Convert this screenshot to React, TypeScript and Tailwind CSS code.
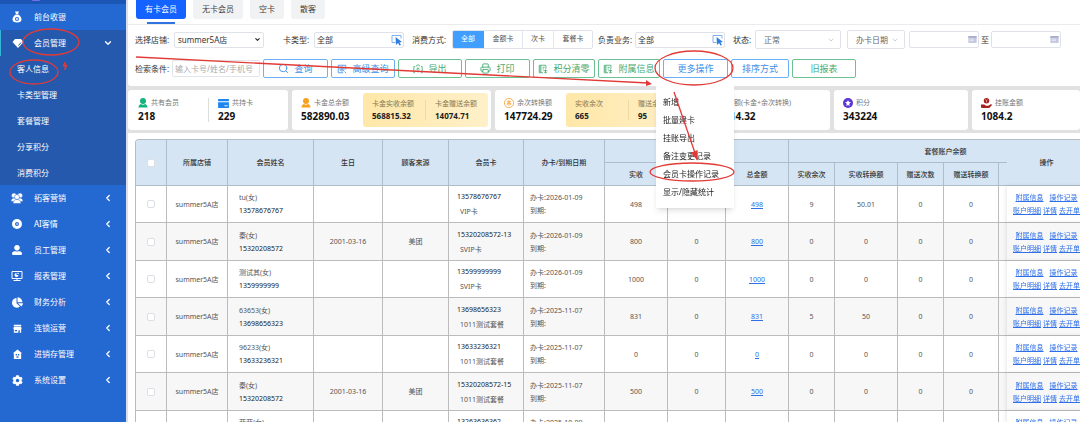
import React from 'react';
import { FaChartPie, FaCog, FaUserAlt } from 'react-icons/fa';
import { ChevronDown, ChevronLeft, Printer, Search } from 'lucide-react';
import clsx from 'clsx';

const BagIcon = () => (
  <svg viewBox="0 0 24 24" className="size-3" fill="currentColor">
    <path d="M8 1h8l-2 5h-4z" />
    <path
      fillRule="evenodd"
      d="M9 7h6c4 3 6 7 6 10 0 4-3 6-9 6s-9-2-9-6c0-3 2-7 6-10zm3 5a4 4 0 1 0 0 8 4 4 0 0 0 0-8z"
    />
    <circle cx="12" cy="16" r="2" />
  </svg>
);

const DiamondIcon = () => (
  <svg viewBox="0 0 24 24" className="size-3" fill="currentColor">
    <path d="M6 4h12l5 6-11 12L1 10z" />
    <path d="M13 17l5-6" stroke="#2559ad" strokeWidth="2" fill="none" />
  </svg>
);

const GroupIcon = () => (
  <svg viewBox="0 0 24 24" className="size-3" fill="currentColor" stroke="#2468d2">
    <circle cx="6" cy="7" r="5" />
    <circle cx="18" cy="7" r="5" />
    <path d="M0 19c0-5 3-7 6-7s5 2 6 4c1-2 3-4 6-4s6 2 6 7z" />
    <circle cx="12" cy="10" r="5" />
    <path d="M4 23c0-6 4-8 8-8s8 2 8 8z" />
  </svg>
);

const PlayIcon = () => (
  <svg viewBox="0 0 24 24" className="size-3" fill="currentColor">
    <path
      fillRule="evenodd"
      d="M12 2a10 10 0 1 0 0 20 10 10 0 0 0 0-20zm0 6a4 4 0 1 1 0 8 4 4 0 0 1 0-8z"
    />
    <path d="M11 10l4 2-4 2z" />
  </svg>
);

const MonitorIcon = () => (
  <svg viewBox="0 0 24 24" className="size-3" fill="none" stroke="currentColor" strokeWidth="2">
    <path d="M2 3h20v14H2zM5 21h14M12 17v4" />
    <path d="M11 6a4 4 0 1 0 4 4h-4z" fill="currentColor" stroke="none" />
    <path d="M13 5v3h3a3 3 0 0 0-3-3z" fill="currentColor" stroke="none" />
  </svg>
);

const ShopIcon = () => (
  <svg viewBox="0 0 24 24" className="size-[11px]" fill="currentColor">
    <path d="M4 4h16v3H4zM4 8h16l1 5H3z" />
    <path fillRule="evenodd" d="M4 13h16v8h-3v-5h-3v5H4zm2 2v3h5v-3z" />
  </svg>
);

const HouseIcon = () => (
  <svg viewBox="0 0 24 24" className="size-[11px]" fill="currentColor">
    <path
      fillRule="evenodd"
      d="M12 1l10 8h-2v13H4V9H2zm-4 10v3h3v-3zm5 0v3h3v-3zm-3 5v3h4v-3z"
    />
  </svg>
);

const PickIcon = () => (
  <svg viewBox="0 0 24 24" className="size-3 shrink-0" fill="none">
    <path d="M9 17H2V3h18v6" stroke="#7fb2ee" strokeWidth="2" />
    <path d="M9 6l13 10-5 1 3 5-3 1-3-5-4 4z" fill="#2f7fe0" />
  </svg>
);

const CalendarIcon = () => (
  <svg viewBox="0 0 24 24" className="size-[9px] shrink-0">
    <path d="M1 3h22v18H1z" fill="#c3c6dc" />
    <path d="M1 3h22v4H1z" fill="#a4a9c8" />
    <path d="M4 11h12M4 15h12" stroke="#eef" strokeWidth="2" />
  </svg>
);

const NoteIcon = () => (
  <svg viewBox="0 0 24 24" className="size-[10px]" fill="none" stroke="currentColor" strokeWidth="2">
    <path d="M12 21H3V3h16v9M3 7h4M3 12h4M3 17h4M7 3v18M11 8h5M11 12h3M13 16h9M18 13v9M15 19l3 3 3-3" />
  </svg>
);

const AtIcon = () => (
  <svg viewBox="0 0 24 24" className="size-[10px]" fill="none" stroke="currentColor" strokeWidth="2">
    <path d="M21 13V3H3v18h12M18 18l4 4" />
    <circle cx="12" cy="12" r="5" />
    <circle cx="12" cy="12" r="2" />
  </svg>
);

const ExportIcon = () => (
  <svg viewBox="0 0 24 24" className="size-[10px]" fill="none" stroke="currentColor" strokeWidth="2">
    <path d="M5 6H2v15h3M19 6h3v15h-3M12 20V9M8 13l4-4 4 4" />
    <path d="M8 6a4 4 0 0 1 8 0" />
  </svg>
);

const PersonIcon = ({ className }: { className: string }) => (
  <svg viewBox="0 0 20 20" className={clsx('size-[10px]', className)} fill="currentColor">
    <circle cx="10" cy="6" r="6" />
    <path d="M1 19c0-4 2-6 5-7 2 2 6 2 8 0 3 1 5 3 5 7z" />
  </svg>
);

const CardIcon = () => (
  <svg viewBox="0 0 24 20" className="h-[9px] w-[11px]" fill="#1f86f0">
    <path d="M0 0h24v5H0zM0 7h24v13H0z" />
    <path d="M14 15h7" stroke="#fff" strokeWidth="2" />
  </svg>
);

const CoinIcon = () => (
  <svg viewBox="0 0 24 24" className="size-[10px]" fill="none" stroke="#f5a238" strokeWidth="2">
    <circle cx="12" cy="12" r="11" />
    <path d="M7 8h10M12 6v13M8 12h8v5M8 12v5" />
  </svg>
);

const StarIcon = () => (
  <svg viewBox="0 0 24 24" className="size-[10px]">
    <circle cx="12" cy="12" r="12" fill="#5b35d5" />
    <path d="M12 5l2 4 5 1-4 4 1 5-4-2-4 2 1-5-4-4 5-1z" fill="#fff" />
  </svg>
);

const HandIcon = () => (
  <svg viewBox="0 0 24 24" className="size-[11px]" fill="#a8201a">
    <circle cx="12" cy="6" r="6" />
    <path d="M0 14h7l4 3h5l6-4 2 2-6 7H5l-5-1z" />
    <path d="M10 3l2 3 2-3M12 6v4" stroke="#fff" fill="none" />
  </svg>
);

const subMenu = ['客人信息', '卡类型管理', '套餐管理', '分享积分', '消费积分'];

const menu = [
  { label: '拓客营销', icon: <GroupIcon /> },
  { label: 'AI客情', icon: <PlayIcon /> },
  { label: '员工管理', icon: <FaUserAlt className="size-[10px]" /> },
  { label: '报表管理', icon: <MonitorIcon /> },
  { label: '财务分析', icon: <FaChartPie className="size-[11px]" /> },
  { label: '连锁运营', icon: <ShopIcon /> },
  { label: '进销存管理', icon: <HouseIcon /> },
  { label: '系统设置', icon: <FaCog className="size-[11px]" /> },
];

const Sidebar: React.FC = () => (
  <nav className="flex w-[126px] shrink-0 flex-col bg-[#2468d2] text-[8px] text-white">
    <div className="flex h-1 bg-[#1b56b5] pl-8">
      <span className="h-px w-2 rounded-b bg-[#7a6cf0]" />
    </div>
    <a href="#cashier" className="flex h-[26px] items-center">
      <span className="flex w-[34px] justify-center">
        <BagIcon />
      </span>
      前台收银
    </a>
    <div className="bg-[#2559ad]">
      <button className="flex h-[26px] w-full items-center border-l border-[#35b5d8] pr-[13px]">
        <span className="flex w-[33px] justify-center">
          <DiamondIcon />
        </span>
        <span className="flex-1 text-left">会员管理</span>
        <ChevronDown className="size-[10px]" strokeWidth={3} />
      </button>
      {subMenu.map((item) => (
        <a key={item} href={`#${item}`} className="flex h-[26px] items-center pl-[17px] last:h-[25px]">
          {item}
        </a>
      ))}
    </div>
    {menu.map((item) => (
      <button key={item.label} className="flex h-[26px] items-center pr-[13px]">
        <span className="flex w-[34px] justify-center">{item.icon}</span>
        <span className="flex-1 text-left">{item.label}</span>
        <ChevronLeft className="size-[10px]" strokeWidth={3} />
      </button>
    ))}
  </nav>
);

const tabs = ['无卡会员', '空卡', '散客'];

const Tabs: React.FC = () => (
  <div className="flex h-[25px] gap-[7px] border-b border-[#ebebee] pl-2 text-[8px] text-[#444]">
    <div className="flex flex-col items-center justify-between">
      <button className="h-[19px] rounded-b-[3px] bg-[#1462ff] px-[9px] pb-[2px] text-white">有卡会员</button>
      <span className="h-[2px] w-7 bg-[#2f74e0]" />
    </div>
    {tabs.map((tab) => (
      <button key={tab} className="h-[19px] rounded-b-[3px] bg-[#f1f2f3] px-[9px] pb-[2px]">
        {tab}
      </button>
    ))}
  </div>
);

const box = 'flex items-center rounded-[2px] border border-[#dfe2e8] bg-white';

const Filters: React.FC = () => (
  <div className="mt-[5px] flex h-[19px] items-center pl-[7px] text-[8px] whitespace-nowrap text-[#333] *:shrink-0">
    <label htmlFor="shop" className="w-[39px]">
      选择店铺:
    </label>
    <div className={clsx(box, 'h-4 w-[90px] pr-[2px]')}>
      <select id="shop" className="w-full flex-1 appearance-none pl-[3px] outline-none">
        <option>summer5A店</option>
      </select>
      <ChevronDown className="size-[7px]" strokeWidth={4} />
    </div>
    <label htmlFor="card-type" className="ml-[19px] w-[31px]">
      卡类型:
    </label>
    <div className={clsx(box, 'h-4 w-[90px]')}>
      <input id="card-type" defaultValue="全部" className="w-0 flex-1 pl-[2px] outline-none" />
      <PickIcon />
    </div>
    <span className="ml-2 w-[40px]">消费方式:</span>
    <div className="flex h-[19px] overflow-hidden rounded-[2px] border border-[#dfe2e8] text-[7px] text-[#555]">
      <button className="-my-px -ml-px w-8 bg-[#409eff] text-white">全部</button>
      <button className="w-[38px]">金额卡</button>
      <button className="w-8 border-x border-[#e4e7ed]">次卡</button>
      <button className="w-[38px]">套餐卡</button>
    </div>
    <label htmlFor="business" className="ml-[5px] w-[37px]">
      负责业务:
    </label>
    <div className={clsx(box, 'h-4 w-[90px]')}>
      <input id="business" defaultValue="全部" className="w-0 flex-1 pl-[2px] outline-none" />
      <PickIcon />
    </div>
    <label htmlFor="status" className="ml-2 w-[22px]">
      状态:
    </label>
    <div className={clsx(box, 'h-[19px] w-[86px] pr-[5px] text-[#666]')}>
      <select id="status" className="w-full flex-1 appearance-none pl-2 outline-none">
        <option>正常</option>
      </select>
      <ChevronDown className="size-2 text-[#b5b9c2]" />
    </div>
    <div className={clsx(box, 'ml-[6px] h-[19px] w-[58px] pr-[5px] text-[#666]')}>
      <select aria-label="日期类型" className="w-full flex-1 appearance-none pl-2 outline-none">
        <option>办卡日期</option>
      </select>
      <ChevronDown className="size-2 text-[#b5b9c2]" />
    </div>
    <div className={clsx(box, 'ml-1 h-[17px] w-[70px] pr-px')}>
      <input aria-label="开始日期" className="w-0 flex-1 outline-none" />
      <CalendarIcon />
    </div>
    <span className="mx-[2px]">至</span>
    <div className={clsx(box, 'h-[17px] w-[70px] pr-px')}>
      <input aria-label="结束日期" className="w-0 flex-1 outline-none" />
      <CalendarIcon />
    </div>
  </div>
);

const moreActions = ['新增', '批量建卡', '挂账导出', '备注变更记录', '会员卡操作记录', '显示/隐藏统计'];

const button = 'flex h-[19px] items-center justify-center gap-[5px] rounded-[2px] border bg-white';
const blue = 'border-[#6cb0f5] text-[#3d8fe8]';
const green = 'border-[#6cc093] text-[#45ab74]';

const Actions: React.FC = () => (
  <div className="mt-[10px] flex h-[19px] items-center gap-[3px] pl-[7px] text-[9px] whitespace-nowrap *:shrink-0">
    <label htmlFor="keyword" className="w-[34px] text-[8px] text-[#333]">
      检索条件:
    </label>
    <input
      id="keyword"
      placeholder="输入卡号/姓名/手机号"
      className="h-[17px] w-[88px] rounded-[2px] border border-[#e2e5ea] pl-[2px] text-[8px] outline-none placeholder:text-[#aaa]"
    />
    <button className={clsx(button, blue, 'w-[65px]')}>
      <Search className="size-[11px]" />
      查询
    </button>
    <button className={clsx(button, blue, 'w-[64px]')}>
      <AtIcon />
      高级查询
    </button>
    <button className={clsx(button, green, 'w-[64px]')}>
      <ExportIcon />
      导出
    </button>
    <button className={clsx(button, green, 'w-[65px]')}>
      <Printer className="size-[11px]" />
      打印
    </button>
    <button className={clsx(button, green, 'w-[62px]')}>
      <NoteIcon />
      积分清零
    </button>
    <button className={clsx(button, green, 'w-[62px]')}>
      <NoteIcon />
      附属信息
    </button>
    <div className="relative">
      <button className={clsx(button, blue, 'w-[65px]')}>更多操作</button>
      <ul className="absolute top-[27px] -left-[7px] z-20 w-[78px] bg-white py-[7px] text-[8px] text-[#222] shadow-md">
        {moreActions.map((action) => (
          <li key={action}>
            <button className="h-[18px] w-full pl-[7px] text-left">{action}</button>
          </li>
        ))}
      </ul>
    </div>
    <button className={clsx(button, blue, 'w-[58px]')}>排序方式</button>
    <button className={clsx(button, green, 'w-[64px]')}>旧报表</button>
  </div>
);

interface StatProps {
  icon: React.ReactNode;
  label: string;
  value: string;
  className?: string;
}

const Stat: React.FC<StatProps> = ({ icon, label, value, className }) => (
  <div className={clsx('flex flex-col justify-center', className)}>
    <div className="flex h-3 items-center gap-[3px] text-[7px] text-[#777]">
      {icon}
      {label}
    </div>
    <div className="h-[14px] text-[10px] leading-[14px] font-bold text-[#111]">{value}</div>
  </div>
);

const SubStat: React.FC<{ label: string; value: string }> = ({ label, value }) => (
  <div className="flex flex-1 flex-col justify-center pl-[9px]">
    <div className="h-3 text-[7px] leading-[12px] text-[#857850]">{label}</div>
    <div className="h-3 text-[8px] leading-[12px] font-bold text-[#222]">{value}</div>
  </div>
);

const amber = 'flex h-[34px] items-center rounded-[3px] bg-linear-to-r from-[#ffe7a8] to-[#fff0c9]';

const Stats: React.FC = () => (
  <div className="flex gap-1 bg-[#e1e1e1] pt-1 pb-[3px] whitespace-nowrap *:h-10 *:rounded-[3px] *:bg-white">
    <div className="flex w-[160px] items-center pl-[10px]">
      <Stat
        icon={<PersonIcon className="text-[#15b27a]" />}
        label="共有会员"
        value="218"
        className="w-[70px]"
      />
      <span className="mr-[9px] h-6 w-px bg-[#ddd]" />
      <Stat icon={<CardIcon />} label="共持卡" value="229" />
    </div>
    <div className="flex w-[199px] items-center pl-[9px]">
      <Stat
        icon={<PersonIcon className="text-[#f9a11f]" />}
        label="卡金总余额"
        value="582890.03"
        className="w-[62px]"
      />
      <div className={clsx(amber, 'w-[125px]')}>
        <SubStat label="卡金实收余额" value="568815.32" />
        <span className="h-5 w-px bg-[#eed9a0]" />
        <SubStat label="卡金赠送余额" value="14074.71" />
      </div>
    </div>
    <div className="flex w-[199px] items-center pl-[9px]">
      <Stat icon={<CoinIcon />} label="余次转换额" value="147724.29" className="w-[62px]" />
      <div className={clsx(amber, 'w-[125px]')}>
        <SubStat label="实收余次" value="665" />
        <span className="h-5 w-px bg-[#eed9a0]" />
        <SubStat label="赠送余次" value="95" />
      </div>
    </div>
    <div className="flex w-[132px] items-center pl-[9px]">
      <Stat icon={<CoinIcon />} label="总余额(卡金+余次转换)" value="730614.32" />
    </div>
    <div className="flex w-[134px] items-center pl-[9px]">
      <Stat icon={<StarIcon />} label="积分" value="343224" />
    </div>
    <div className="flex flex-1 items-center pl-[9px]">
      <Stat icon={<HandIcon />} label="挂账金额" value="1084.2" />
    </div>
  </div>
);

interface Member {
  name: string;
  phone: string;
  birthday?: string;
  source?: string;
  card: string;
  cardType: string;
  opened: string;
  paid: string;
  times: string;
  converted: string;
}

const members: Member[] = [
  { name: 'tu(女)', phone: '13578676767', card: '13578676767', cardType: 'VIP卡', opened: '2026-01-09', paid: '498', times: '9', converted: '50.01' },
  { name: '秦(女)', phone: '15320208572', birthday: '2001-03-16', source: '美团', card: '15320208572-13', cardType: 'SVIP卡', opened: '2026-01-09', paid: '800', times: '0', converted: '0' },
  { name: '测试其(女)', phone: '1359999999', card: '13599999999', cardType: 'SVIP卡', opened: '2026-01-09', paid: '1000', times: '0', converted: '0' },
  { name: '63653(女)', phone: '13698656323', card: '13698656323', cardType: '1011测试套餐', opened: '2025-11-07', paid: '831', times: '5', converted: '50' },
  { name: '96233(女)', phone: '13633236321', card: '13633236321', cardType: '1011测试套餐', opened: '2025-11-07', paid: '0', times: '0', converted: '0' },
  { name: '秦(女)', phone: '15320208572', birthday: '2001-03-16', source: '美团', card: '15320208572-15', cardType: '1011测试套餐', opened: '2025-11-07', paid: '500', times: '0', converted: '0' },
  { name: '菲菲(女)', phone: '13263636362', card: '13263636362', cardType: 'VIP卡', opened: '2025-10-09', paid: '0', times: '0', converted: '0' },
];

const columns = [31, 61, 86, 69, 66, 75, 81, 63, 58, 63, 46, 63, 46, 55, 104, 80];

const check = 'block size-2 appearance-none rounded-[2px] border border-[#dcdfe6] bg-white mx-auto';
const link = 'text-[#2f6fe8] underline';

const MemberTable: React.FC = () => (
  <div className="flex-1 overflow-hidden bg-white pt-[6px] pl-[7px]">
    <div className="overflow-hidden rounded-tl-[4px] border-t border-l border-[#b4bcc4]">
      <table className="w-[1047px] table-fixed border-separate border-spacing-0 text-center text-[7px] leading-[13px] whitespace-nowrap text-[#555]">
        <colgroup>
          {columns.map((width, i) => (
            <col key={i} style={{ width }} />
          ))}
        </colgroup>
        <thead className="text-[#333] [&_th]:border-r [&_th]:border-b [&_th]:border-[#aebdcb] [&_th]:bg-[#d5e5f4] [&_th]:p-0 [&_th]:font-medium">
          <tr className="h-[23px]">
            <th rowSpan={2}>
              <input type="checkbox" aria-label="全选" className={check} />
            </th>
            <th rowSpan={2}>所属店铺</th>
            <th rowSpan={2}>会员姓名</th>
            <th rowSpan={2}>生日</th>
            <th rowSpan={2}>顾客来源</th>
            <th rowSpan={2}>会员卡</th>
            <th rowSpan={2}>办卡/到期日期</th>
            <th colSpan={3} />
            <th colSpan={5}>套餐账户余额</th>
            <th rowSpan={2} className="sticky -right-[7px]">
              操作
            </th>
          </tr>
          <tr className="h-[23px]">
            <th>实收</th>
            <th />
            <th>总金额</th>
            <th>实收余次</th>
            <th>实收转换额</th>
            <th>赠送次数</th>
            <th>赠送转换额</th>
            <th />
          </tr>
        </thead>
        <tbody className="[&_td]:border-r [&_td]:border-b [&_td]:border-[#bcbcbc] [&_td]:p-0">
          {members.map((m, i) => (
            <tr key={i} className="group h-[37px] even:h-[38px] even:bg-[#f7f7f7]">
              <td>
                <input type="checkbox" aria-label={m.name} className={check} />
              </td>
              <td>summer5A店</td>
              <td>
                <div className="pl-[11px] text-left">
                  <div>{m.name}</div>
                  <div className="text-[#222]">{m.phone}</div>
                </div>
              </td>
              <td>{m.birthday}</td>
              <td>{m.source}</td>
              <td>
                <div className="pl-2 text-left leading-[15px]">
                  <div className="text-[#222]">{m.card}</div>
                  <div className="pl-[3px]">{m.cardType}</div>
                </div>
              </td>
              <td>
                <div className="pl-[6px] text-left">
                  <div>办卡:{m.opened}</div>
                  <div>到期:</div>
                </div>
              </td>
              <td>{m.paid}</td>
              <td>0</td>
              <td>
                <a href="#total" className={link}>
                  {m.paid}
                </a>
              </td>
              <td>{m.times}</td>
              <td>{m.converted}</td>
              <td>0</td>
              <td>0</td>
              <td />
              <td className="sticky -right-[7px] bg-white shadow-[-1px_0_4px_rgba(0,0,0,0.1)] group-even:bg-[#f7f7f7]">
                <div className="flex h-[13px] items-center justify-center gap-[6px]">
                  <a href="#extra" className={link}>附属信息</a>
                  <a href="#log" className={link}>操作记录</a>
                </div>
                <div className="flex h-[13px] items-center justify-center gap-[2px]">
                  <a href="#account" className={link}>账户明细</a>
                  <a href="#detail" className={link}>详情</a>
                  <a href="#order" className={link}>去开单</a>
                </div>
              </td>
            </tr>
          ))}
        </tbody>
      </table>
    </div>
  </div>
);

// hand-drawn marks that lead to the card operation log
const Marks: React.FC = () => (
  <svg
    width="1080"
    height="422"
    className="pointer-events-none absolute top-0 left-0 z-30"
    fill="none"
    stroke="#e23b37"
    strokeWidth="1.3"
  >
    <ellipse cx="51" cy="42" rx="28" ry="13" />
    <ellipse cx="34" cy="72" rx="24" ry="12" />
    <path d="M65 62l-2 4 4-1-2 5z" fill="#e23b37" strokeWidth="1" />
    <path d="M136 57L648 83" />
    <path d="M652 84l-6-4v6z" fill="#e23b37" stroke="none" />
    <ellipse cx="694" cy="68" rx="39" ry="17" />
    <path d="M674 92l21 61" />
    <path d="M697 159l-5-6 5-2z" fill="#e23b37" />
    <ellipse cx="692" cy="172" rx="42" ry="9" />
  </svg>
);

const App: React.FC = () => (
  <div className="relative flex h-screen overflow-hidden bg-[#dcdff0] font-['Noto_Sans','Noto_Sans_CJK_SC',sans-serif]">
    <Sidebar />
    <main className="ml-[2px] flex min-w-0 flex-1 flex-col">
      <div className="rounded-bl-[3px] bg-white pb-2">
        <Tabs />
        <Filters />
        <Actions />
      </div>
      <Stats />
      <MemberTable />
    </main>
    <Marks />
  </div>
);

export default App;
